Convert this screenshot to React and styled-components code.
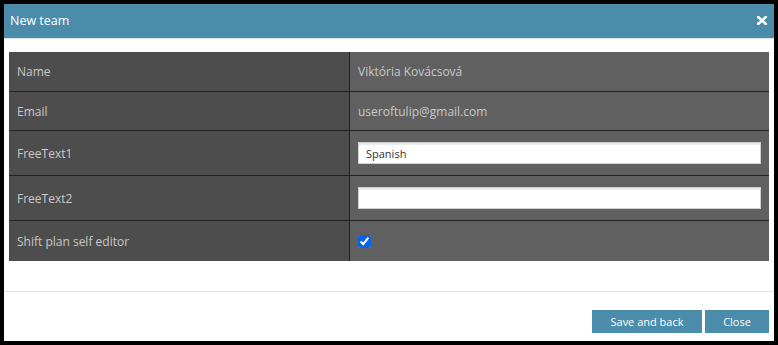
import React from 'react';
import styled, { createGlobalStyle } from 'styled-components';

const Global = createGlobalStyle`
  html, body {
    margin: 0;
    padding: 0;
    background: #000;
    width: 778px;
    height: 345px;
    overflow: hidden;
  }
  * { box-sizing: border-box; }
`;

const Dialog = styled.div`
  margin: 4px;
  width: 770px;
  height: 337px;
  background: #fff;
  display: flex;
  flex-direction: column;
  font-family: "Open Sans", "Noto Sans", sans-serif;
`;

const Header = styled.div`
  height: 35px;
  background: #4a8ca9;
  border-bottom: 1px solid #dfe6ea;
  display: flex;
  align-items: center;
  justify-content: space-between;
  padding: 0 7px 1px 6px;
  color: #fff;
  font-size: 12.5px;
`;

const CloseBtn = styled.svg`
  width: 10px;
  height: 9px;
  cursor: pointer;
`;

const Body = styled.div`
  padding: 13px 5px 0 5px;
`;

const Table = styled.div`
  display: grid;
  grid-template-columns: 340px 1fr;
  width: 760px;
`;

const Cell = styled.div`
  height: ${(p) => p.h}px;
  display: flex;
  align-items: center;
  padding-left: 8px;
  font-size: 12px;
  color: #c9c9c9;
  background: ${(p) => (p.right ? '#606060' : '#4d4d4d')};
  border-left: ${(p) => (p.right ? '1px solid #222' : 'none')};
  border-top: ${(p) => (p.first ? 'none' : '1px solid #222')};
  padding-right: ${(p) => (p.right ? '8px' : '0')};
`;

const TextInput = styled.input`
  width: 100%;
  height: 22px;
  border: 1px solid #cfcfcf;
  box-shadow: inset 0 2px 0 #ececec;
  background: #fff;
  font-family: "Open Sans", "Noto Sans", sans-serif;
  font-size: 11px;
  color: #333;
  padding: 0 7px;
  outline: none;
`;

const Check = styled.input`
  width: 13px;
  height: 13px;
  margin: 0;
  accent-color: #0b63e5;
`;

const Footer = styled.div`
  margin-top: 30px;
  border-top: 1px solid #e3e3e3;
  display: flex;
  justify-content: flex-end;
  gap: 3px;
  padding: 18px 5px 0 0;
`;

const Button = styled.button`
  height: 23px;
  width: ${(p) => p.w}px;
  background: #4a8ca9;
  color: #fff;
  border: none;
  font-family: "Open Sans", "Noto Sans", sans-serif;
  font-size: 11px;
  padding: 0;
  cursor: pointer;
`;

const rows = [
  { label: 'Name', value: 'Viktória Kovácsová', h: 39 },
  { label: 'Email', value: 'useroftulip@gmail.com', h: 39 },
  { label: 'FreeText1', input: 'Spanish', h: 45 },
  { label: 'FreeText2', input: '', h: 45 },
  { label: 'Shift plan self editor', check: true, h: 41 },
];

export default function App() {
  return (
    <>
      <Global />
      <Dialog>
        <Header>
          <span>New team</span>
          <CloseBtn viewBox="0 0 10 9">
            <path d="M1.2 1 L8.8 8 M8.8 1 L1.2 8" stroke="#fff" strokeWidth="2.6" strokeLinecap="square" />
          </CloseBtn>
        </Header>
        <Body>
          <Table>
            {rows.map((r, i) => (
              <React.Fragment key={r.label}>
                <Cell h={r.h} first={i === 0}>{r.label}</Cell>
                <Cell h={r.h} first={i === 0} right>
                  {r.value}
                  {r.input !== undefined && <TextInput defaultValue={r.input} />}
                  {r.check && <Check type="checkbox" defaultChecked />}
                </Cell>
              </React.Fragment>
            ))}
          </Table>
        </Body>
        <Footer>
          <Button w={110}>Save and back</Button>
          <Button w={64}>Close</Button>
        </Footer>
      </Dialog>
    </>
  );
}
